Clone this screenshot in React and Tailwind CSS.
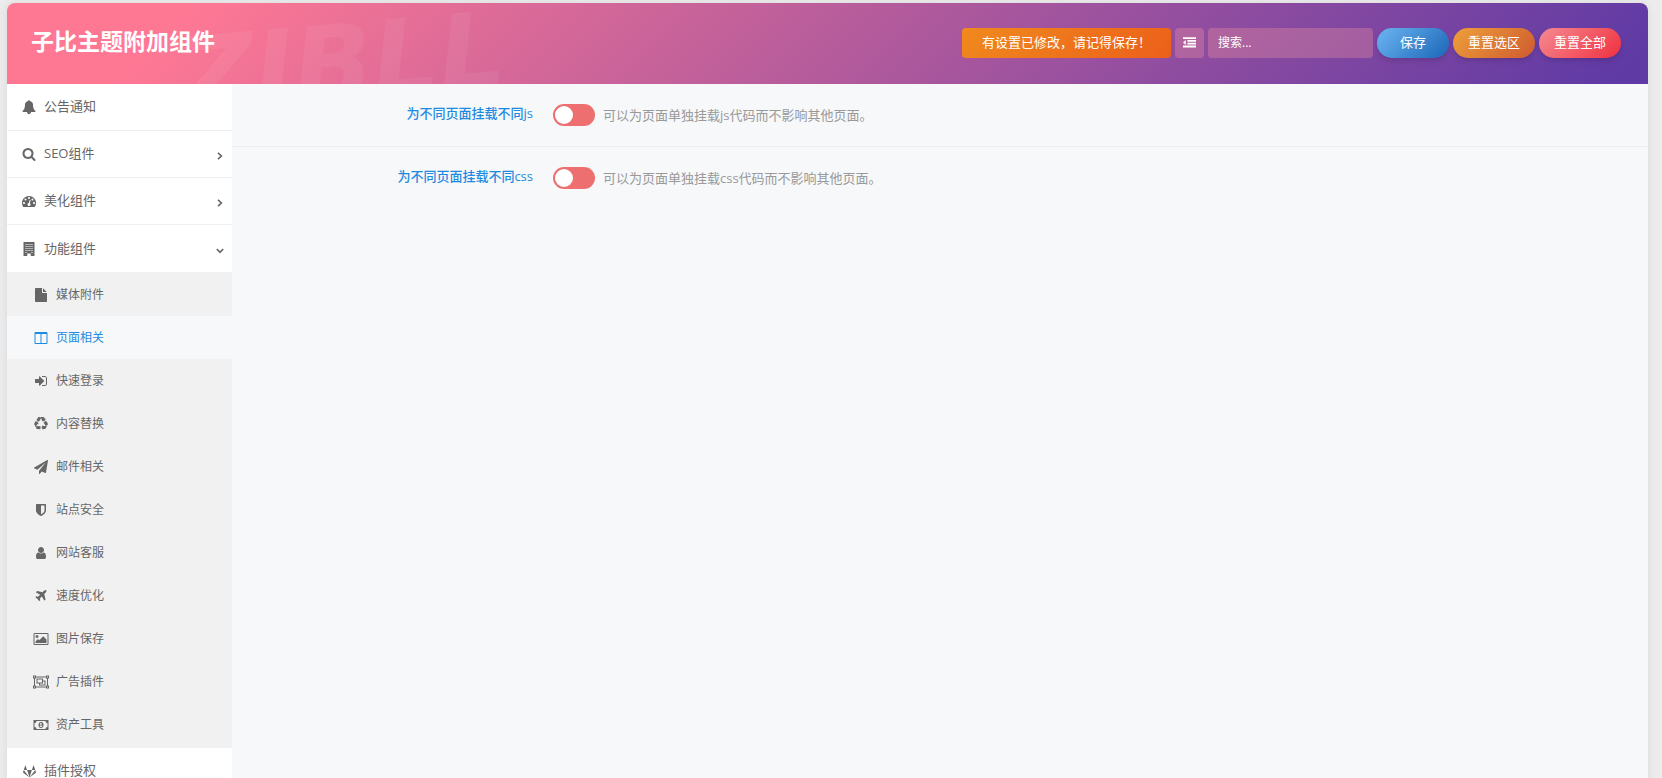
import React, { useState } from 'react';
import { FaGitlab } from 'react-icons/fa';

// Classic 1792-unit glyphs used across the menu.
const GLYPHS = {
  bell: 'M1728 1408q0 52-38 90t-90 38h-448q0 106-75 181t-181 75-181-75-75-181h-448q-52 0-90-38t-38-90q50-42 91-88t85-119.5 74.5-158.5 50-206 19.5-260q0-152 117-282.5t307-158.5q-8-19-8-39 0-40 28-68t68-28 68 28 28 68q0 20-8 39 190 28 307 158.5t117 282.5q0 139 19.5 260t50 206 74.5 158.5 85 119.5 91 88z',
  search: 'M1216 832q0-185-131.5-316.5t-316.5-131.5-316.5 131.5-131.5 316.5 131.5 316.5 316.5 131.5 316.5-131.5 131.5-316.5zm512 832q0 52-38 90t-90 38q-54 0-90-38l-343-342q-179 124-399 124-143 0-273.5-55.5t-225-150-150-225-55.5-273.5 55.5-273.5 150-225 225-150 273.5-55.5 273.5 55.5 225 150 150 225 55.5 273.5q0 220-124 399l343 343q37 37 37 90z',
  dashboard: 'M384 1152q0-53-37.5-90.5t-90.5-37.5-90.5 37.5-37.5 90.5 37.5 90.5 90.5 37.5 90.5-37.5 37.5-90.5zm192-448q0-53-37.5-90.5t-90.5-37.5-90.5 37.5-37.5 90.5 37.5 90.5 90.5 37.5 90.5-37.5 37.5-90.5zm428 481l101-382q6-26-7.5-48.5t-38.5-29.5-48 6.5-30 39.5l-101 382q-60 5-107 43.5t-63 98.5q-20 77 20 146t117 89 146-20 89-117q16-60-6-117t-72-91zm660-33q0-53-37.5-90.5t-90.5-37.5-90.5 37.5-37.5 90.5 37.5 90.5 90.5 37.5 90.5-37.5 37.5-90.5zm-640-640q0-53-37.5-90.5t-90.5-37.5-90.5 37.5-37.5 90.5 37.5 90.5 90.5 37.5 90.5-37.5 37.5-90.5zm448 192q0-53-37.5-90.5t-90.5-37.5-90.5 37.5-37.5 90.5 37.5 90.5 90.5 37.5 90.5-37.5 37.5-90.5zm320 448q0 261-141 483-19 29-54 29h-1402q-35 0-54-29-141-221-141-483 0-182 71-348t191-286 286-191 348-71 348 71 286 191 191 286 71 348z',
  building: 'M192 0H1600V1792H1120V1472H672V1792H192zM448 256v128h128v-128zm256 0v128h128v-128zm256 0v128h128v-128zm256 0v128h128v-128zM448 512v128h128v-128zm256 0v128h128v-128zm256 0v128h128v-128zm256 0v128h128v-128zM448 768v128h128v-128zm256 0v128h128v-128zm256 0v128h128v-128zm256 0v128h128v-128zM448 1024v128h128v-128zm256 0v128h128v-128zm256 0v128h128v-128zm256 0v128h128v-128zM448 1280v128h128v-128zm768 0v128h128v-128z',
  file: 'M1152 512v-472q22 14 36 28l408 408q14 14 28 36h-472zm-128 32q0 40 28 68t68 28h544v1056q0 40-28 68t-68 28h-1344q-40 0-68-28t-28-68v-1600q0-40 28-68t68-28h800v544z',
  columns: 'M224 1536h608v-1152h-640v1120q0 13 9.5 22.5t22.5 9.5zm1376-32v-1120h-640v1152h608q13 0 22.5-9.5t9.5-22.5zm128-1216v1216q0 66-47 113t-113 47h-1344q-66 0-113-47t-47-113v-1216q0-66 47-113t113-47h1344q66 0 113 47t47 113z',
  signIn: 'M1312 896q0 26-19 45l-544 544q-19 19-45 19t-45-19-19-45v-288h-448q-26 0-45-19t-19-45v-384q0-26 19-45t45-19h448v-288q0-26 19-45t45-19 45 19l544 544q19 19 19 45zm352-352v704q0 119-84.5 203.5t-203.5 84.5h-320q-13 0-22.5-9.5t-9.5-22.5q0-4-1-20t-.5-26.5 3-23.5 10-19.5 20.5-6.5h320q66 0 113-47t47-113v-704q0-66-47-113t-113-47h-312l-11.5-1-11.5-3-8-5.5-7-9-2-13.5q0-4-1-20t-.5-26.5 3-23.5 10-19.5 20.5-6.5h320q119 0 203.5 84.5t84.5 203.5z',
  recycle: 'M836 1169l-15 368-2 22-420-29q-36-3-67-31.5t-47-65.5q-11-27-14.5-55t4-65 12-55 21.5-64 19-53q78 12 509 28zm-387-586l180 379-147-92q-63 72-111.5 144.5t-72.5 125-39.5 94.5-18.5 63l-4 21-190-357q-17-26-18-56t6-47l8-18q35-63 114-188l-140-86zm1231 517l-188 359q-12 29-36.5 46.5t-43.5 20.5l-18 4q-71 7-219 12l8 164-230-367 211-362 7 173q170 16 283 5t170-33zm-785-924q-47 63-265 435l-317-187-19-12 225-356q20-31 60-45t80-10q24 2 48.5 12t42 21 41.5 33 36 34.5 36 39.5 32 35zm655 307l212 363q18 37 12.5 76t-27.5 74q-13 20-33 37t-38 28-48.5 22-47 16-51.5 14-46 12q-34-72-265-436l313-195zm-143-226l142-83-220 373-419-20 151-86q-34-89-75-166t-75.5-123.5-64.5-80-47-46.5l-17-13 405 1q31-3 58 10.5t39 28.5l11 15q39 61 112 190z',
  plane: 'M1568 160q44 52 12 148t-108 172l-161 161 160 696q5 19-12 33l-128 96q-7 6-19 6-4 0-7-1-15-3-21-16l-279-508-259 259 53 194q5 17-8 31l-96 96q-9 9-23 9h-2q-15-2-24-13l-189-252-252-189q-11-7-13-23-1-13 9-25l96-97q9-9 23-9 6 0 8 1l194 53 259-259-508-279q-14-8-17-24-2-16 9-27l128-128q14-13 30-8l665 159 160-160q76-76 172-108t148 12z',
  send: 'M1764 11q33 24 27 64l-256 1536q-5 29-32 45-14 8-31 8-11 0-24-5l-453-185-242 295q-18 23-49 23-13 0-22-4-19-7-30.5-23.5t-11.5-36.5v-349l864-1059-1069 925-395-162q-37-14-40-55-2-40 32-59l1664-960q15-9 32-9 20 0 36 11z',
  shield: 'M1344 960v-640h-448v1137q119-63 213-137 235-184 235-360zm192-768v768q0 86-33.5 170.5t-83 150-118 127.5-126.5 103-121 77.5-89.5 49.5-42.5 20q-12 6-26 6t-26-6q-16-7-42.5-20t-89.5-49.5-121-77.5-126.5-103-118-127.5-83-150-33.5-170.5v-768q0-26 19-45t45-19h1152q26 0 45 19t19 45z',
  user: 'M1536 1399q0 109-62.5 187t-150.5 78h-854q-88 0-150.5-78t-62.5-187q0-85 8.5-160.5t31.5-152 58.5-131 94-89 134.5-34.5q131 128 313 128t313-128q76 0 134.5 34.5t94 89 58.5 131 31.5 152 8.5 160.5zm-256-887q0 159-112.5 271.5t-271.5 112.5-271.5-112.5-112.5-271.5 112.5-271.5 271.5-112.5 271.5 112.5 112.5 271.5z',
  picture: 'M576 576q0 80-56 136t-136 56-136-56-56-136 56-136 136-56 136 56 56 136zm1024 384v448h-1408v-192l320-320 160 160 512-512zm96-704h-1600q-13 0-22.5 9.5t-9.5 22.5v1216q0 13 9.5 22.5t22.5 9.5h1600q13 0 22.5-9.5t9.5-22.5v-1216q0-13-9.5-22.5t-22.5-9.5zm160 32v1216q0 66-47 113t-113 47h-1600q-66 0-113-47t-47-113v-1216q0-66 47-113t113-47h1600q66 0 113 47t47 113z',
  group: 'M-128 64H256V192H1536V64H1920V448H1792V1344H1920V1728H1536V1600H256V1728H-128V1344H0V448H-128zM0 192V320H128V192zM1664 192V320H1792V192zM256 320V448H128V1344H256V1472H1536V1344H1664V448H1536V320zM0 1472V1600H128V1472zM1664 1472V1600H1792V1472zM320 448H1152V704H1472V1344H640V1088H320zM448 576V960H1024V576zM1152 832V1088H768V1216H1344V832z',
  money: 'M-64 256H1856V1536H-64zM320 384Q320 490 245 565T64 640V1152Q170 1152 245 1227T320 1408H1472Q1472 1302 1547 1227T1728 1152V640Q1622 640 1547 565T1472 384zM896 512Q1216 512 1216 896T896 1280 576 896 896 512zM832 640L704 752 768 832 832 784V1040H736V1136H1056V1040H960V640z',
  outdent: 'M384 544v704L0 896zM0 160H1792V416H0zM608 544H1792V800H608zM608 928H1792V1184H608zM0 1312H1792V1568H0z',
};

const Glyph = ({ name, className }) => (
  <svg viewBox="-128 0 2048 1792" fill="currentColor" fillRule="evenodd" aria-hidden="true" className={className}>
    <path d={GLYPHS[name]} />
  </svg>
);

const MenuIcon = ({ name }) => (
  <span className="flex w-4 shrink-0 justify-center">
    {name === 'gitlab' ? <FaGitlab className="size-[13px]" /> : <Glyph name={name} className="h-[14px] w-4" />}
  </span>
);

const Chevron = ({ open }) => (
  <svg viewBox="0 0 10 10" fill="none" stroke="currentColor" strokeWidth="1.6" aria-hidden="true" className={`mt-1 ml-auto size-[10px] ${open ? 'rotate-90' : ''}`}>
    <path d="M3 1.8 6.4 5 3 8.2" />
  </svg>
);

const SUB_ITEMS = [
  { icon: 'file', label: '媒体附件' },
  { icon: 'columns', label: '页面相关' },
  { icon: 'signIn', label: '快速登录' },
  { icon: 'recycle', label: '内容替换' },
  { icon: 'send', label: '邮件相关' },
  { icon: 'shield', label: '站点安全' },
  { icon: 'user', label: '网站客服' },
  { icon: 'plane', label: '速度优化' },
  { icon: 'picture', label: '图片保存' },
  { icon: 'group', label: '广告插件' },
  { icon: 'money', label: '资产工具' },
];

const MENU = [
  { icon: 'bell', label: '公告通知' },
  { icon: 'search', label: 'SEO组件', expandable: true },
  { icon: 'dashboard', label: '美化组件', expandable: true },
  { icon: 'building', label: '功能组件', expandable: true, children: SUB_ITEMS },
  { icon: 'gitlab', label: '插件授权' },
];

const FIELDS = [
  { id: 'page-js', title: '为不同页面挂载不同js', desc: '可以为页面单独挂载js代码而不影响其他页面。' },
  { id: 'page-css', title: '为不同页面挂载不同css', desc: '可以为页面单独挂载css代码而不影响其他页面。' },
];

const Header = () => (
  <header className="relative flex h-[81px] items-center justify-between overflow-hidden rounded-t-lg bg-linear-[135deg,#fe7894_11%,#5f3aa5_98%] pr-[27px] pb-0.5 pl-6 text-white">
    <span aria-hidden="true" className="pointer-events-none absolute top-3 left-[172px] -rotate-5 font-['DejaVu_Sans',sans-serif] text-[104px] leading-[96px] font-bold text-white/6 italic select-none">
      ZIBLL
    </span>
    <h1 className="relative pb-1 text-[23px] leading-8 font-bold">子比主题附加组件</h1>
    <div className="relative flex items-center gap-1 text-[13px]">
      <div className="flex h-[30px] w-[209px] items-center justify-center rounded bg-linear-[135deg,#f08a1e,#ec5f1a]">有设置已修改，请记得保存！</div>
      <button type="button" aria-label="展开全部" className="flex h-[30px] w-[29px] items-center justify-center rounded bg-[#ff9aa0]/30">
        <Glyph name="outdent" className="h-[13px] w-[15px]" />
      </button>
      <input type="text" aria-label="搜索" placeholder="搜索..." className="h-[30px] w-[165px] rounded bg-[#ff9aa0]/30 px-[10px] text-[12px] placeholder:text-white focus:outline-none" />
      <button type="button" className="h-[30px] w-[72px] rounded-full bg-linear-[135deg,#6cb5f2,#1b66b8] shadow-md">保存</button>
      <button type="button" className="h-[30px] w-[82px] rounded-full bg-linear-[135deg,#eda03a,#cf5a30] shadow-md">重置选区</button>
      <button type="button" className="h-[30px] w-[82px] rounded-full bg-linear-[135deg,#f58a92,#f0303f] shadow-md">重置全部</button>
    </div>
  </header>
);

const Sidebar = ({ active, onSelect }) => (
  <nav className="w-[225px] shrink-0 bg-white text-[13px] text-[#666]">
    <ul>
      {MENU.map((item) => (
        <li key={item.label}>
          <a href="#" className={`flex h-[47px] items-center gap-[7px] pr-[7px] pl-[14px] ${item.children ? '' : 'border-b border-[#f0f0f0]'}`}>
            <MenuIcon name={item.icon} />
            {item.label}
            {item.expandable && <Chevron open={!!item.children} />}
          </a>
          {item.children && (
            <ul className="bg-[#f1f1f1] pt-px pb-0.5 text-[12px]">
              {item.children.map((sub) => (
                <li key={sub.label}>
                  <a
                    href="#"
                    onClick={() => onSelect(sub.label)}
                    className={`flex h-[43px] items-center gap-[7px] pl-[26px] ${active === sub.label ? 'bg-[#f6f8fa] text-[#1e8be0]' : ''}`}
                  >
                    <MenuIcon name={sub.icon} />
                    {sub.label}
                  </a>
                </li>
              ))}
            </ul>
          )}
        </li>
      ))}
    </ul>
  </nav>
);

const SwitchField = ({ field }) => (
  <div className="flex items-start gap-5 border-b border-[#ebedef] py-5 last:border-b-0">
    <label htmlFor={field.id} className="w-[301px] text-right text-[13px] leading-[18px] font-medium text-[#1e8be0]">{field.title}</label>
    <div className="flex items-center gap-2">
      <span className="relative flex h-[22px] w-[42px]">
        <input id={field.id} type="checkbox" className="peer size-full cursor-pointer appearance-none rounded-full bg-[#ed6f6f] checked:bg-[#4fb845]" />
        <span className="pointer-events-none absolute top-0.5 left-0.5 size-[18px] rounded-full bg-white peer-checked:left-[22px]" />
      </span>
      <span className="text-[13px] leading-[22px] text-[#999]">{field.desc}</span>
    </div>
  </div>
);

const App = () => {
  const [active, setActive] = useState('页面相关');

  return (
    <div className="flex min-h-screen bg-[#ececec] pt-[3px] pr-[14px] pl-[7px] font-['Open_Sans','Noto_Sans_CJK_SC',sans-serif]">
      <div className="flex grow flex-col rounded-t-lg shadow-[0_0_10px_rgba(0,0,0,0.08)]">
        <Header />
        <div className="flex grow">
          <Sidebar active={active} onSelect={setActive} />
          <main className="grow bg-[#f6f8fa]">
            {FIELDS.map((field) => <SwitchField key={field.id} field={field} />)}
          </main>
        </div>
      </div>
    </div>
  );
};

export default App;
